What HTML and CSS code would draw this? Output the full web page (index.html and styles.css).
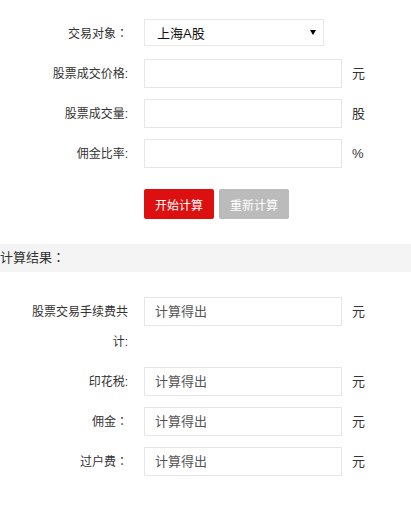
FILE: index.html
```html
<!DOCTYPE html>
<html lang="zh-CN">
<head>
<meta charset="utf-8">
<title>股票交易手续费计算器</title>
<link rel="stylesheet" href="styles.css">
</head>
<body>
<div class="calc">
  <div class="form">
    <div class="row">
      <div class="label">交易对象<span class="colon" lang="zh-TW">：</span></div>
      <div class="select">
        <span class="select-text">上海A股</span>
        <span class="arrow"></span>
      </div>
    </div>
    <div class="row">
      <div class="label">股票成交价格:</div>
      <div class="field"></div>
      <div class="unit">元</div>
    </div>
    <div class="row">
      <div class="label">股票成交量:</div>
      <div class="field"></div>
      <div class="unit">股</div>
    </div>
    <div class="row">
      <div class="label">佣金比率:</div>
      <div class="field"></div>
      <div class="unit">%</div>
    </div>
    <div class="buttons">
      <button class="btn btn-primary">开始计算</button>
      <button class="btn btn-reset">重新计算</button>
    </div>
  </div>

  <div class="section-title">计算结果<span class="colon" lang="zh-TW">：</span></div>

  <div class="form results">
    <div class="row">
      <div class="label">股票交易手续费共计:</div>
      <div class="field">计算得出</div>
      <div class="unit">元</div>
    </div>
    <div class="row">
      <div class="label">印花税:</div>
      <div class="field">计算得出</div>
      <div class="unit">元</div>
    </div>
    <div class="row">
      <div class="label">佣金<span class="colon" lang="zh-TW">：</span></div>
      <div class="field">计算得出</div>
      <div class="unit">元</div>
    </div>
    <div class="row">
      <div class="label">过户费<span class="colon" lang="zh-TW">：</span></div>
      <div class="field">计算得出</div>
      <div class="unit">元</div>
    </div>
  </div>
</div>
</body>
</html>
```

FILE: styles.css
```css
html, body {
  margin: 0;
  padding: 0;
  background: #fff;
}

body {
  font-family: "Liberation Sans", "Noto Sans CJK SC", sans-serif;
  color: #333;
  font-size: 12px;
}

.calc {
  width: 411px;
}

.form {
  padding-top: 19px;
}

.results {
  padding-top: 25px;
}

.row {
  display: flex;
  align-items: flex-start;
  margin-bottom: 10px;
}

.label {
  width: 100px;
  margin-left: 28px;
  margin-right: 16px;
  text-align: right;
  line-height: 30px;
  font-size: 12px;
  color: #333;
}

.colon {
  font-family: "Noto Sans CJK TC", "Noto Sans CJK SC", sans-serif;
  line-height: 0;
}

.select {
  box-sizing: border-box;
  width: 180px;
  height: 27px;
  border: 1px solid #e8e8e8;
  display: flex;
  align-items: center;
  justify-content: space-between;
  padding: 0 7px 0 12px;
  font-size: 13px;
  color: #111;
}

.arrow {
  width: 0;
  height: 0;
  border-left: 3px solid transparent;
  border-right: 3px solid transparent;
  border-top: 5px solid #000;
}

.field {
  box-sizing: border-box;
  width: 198px;
  height: 29px;
  border: 1px solid #e6e6e6;
  padding-left: 10px;
  line-height: 27px;
  font-size: 13px;
  color: #555;
}

.unit {
  margin-left: 10px;
  line-height: 30px;
  font-size: 13px;
  color: #333;
}

.buttons {
  display: flex;
  gap: 5px;
  margin-left: 144px;
  margin-top: 20px;
}

.btn {
  width: 70px;
  height: 30px;
  border: none;
  border-radius: 2px;
  color: #fff;
  font-family: "Liberation Sans", "Noto Sans CJK SC", sans-serif;
  font-size: 12px;
  padding: 0;
}

.btn-primary {
  background: #dc1010;
}

.btn-reset {
  background: #bbbbbb;
}

.section-title {
  margin-top: 25px;
  height: 28px;
  line-height: 28px;
  background: #f4f4f4;
  font-size: 13px;
  color: #333;
}
```
